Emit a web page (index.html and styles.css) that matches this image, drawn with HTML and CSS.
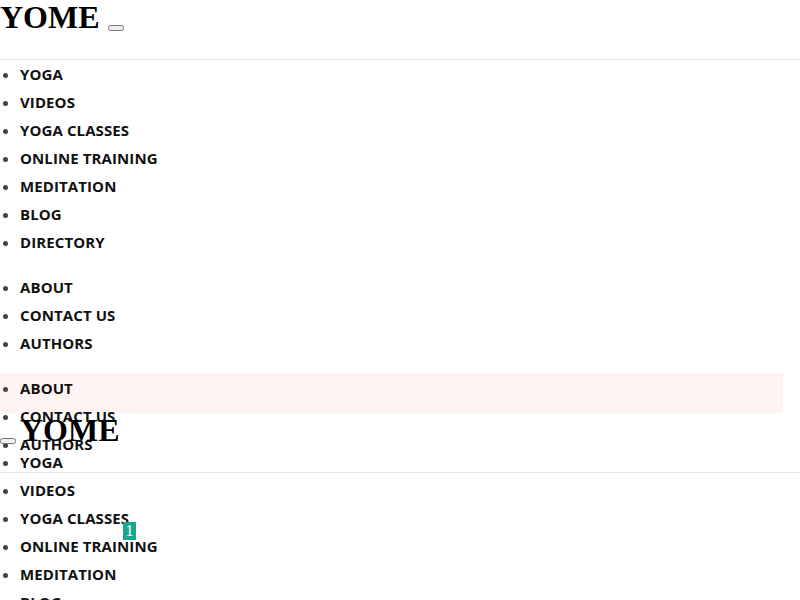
FILE: index.html
```html
<!DOCTYPE html>
<html>
  <head>
    <title>Yome</title>
    <link rel="stylesheet" href="styles.css">
  </head>
  <body>
    <div class="site-header">
      <h1 class="logo">YOME</h1>
      <button class="menu-toggle after-logo"></button>
    </div>
    <ul class="nav-list">
      <li><a href="#">YOGA</a></li>
      <li><a href="#">VIDEOS</a></li>
      <li><a href="#">YOGA CLASSES</a></li>
      <li><a href="#">ONLINE TRAINING</a></li>
      <li><a href="#">MEDITATION</a></li>
      <li><a href="#">BLOG</a></li>
      <li><a href="#">DIRECTORY</a></li>
    </ul>
    <ul class="nav-list secondary">
      <li><a href="#">ABOUT</a></li>
      <li><a href="#">CONTACT US</a></li>
      <li><a href="#">AUTHORS</a></li>
    </ul>
    <div class="top-band">
      <ul class="nav-list">
        <li><a href="#">ABOUT</a></li>
        <li><a href="#">CONTACT US</a></li>
        <li><a href="#">AUTHORS</a></li>
      </ul>
    </div>
    <div class="site-header sticky">
      <button class="menu-toggle"></button>
      <h1 class="logo">YOME</h1>
    </div>
    <ul class="nav-list overlap">
      <li><a href="#">YOGA</a></li>
      <li><a href="#">VIDEOS</a></li>
      <li><a href="#">YOGA CLASSES</a></li>
      <li><a href="#">ONLINE TRAINING</a></li>
      <li><a href="#">MEDITATION</a></li>
      <li><a href="#">BLOG</a></li>
      <li><a href="#">DIRECTORY</a></li>
    </ul>
    <div class="page-body"></div>
    <span class="badge">1</span>
  </body>
</html>
```

FILE: styles.css
```css
body {
  margin: 0;
  position: relative;
}

.site-header {
  height: 59px;
  line-height: 34px;
  border-bottom: 1px solid #e6e6e6;
}

.sticky {
  line-height: 35px;
}

.logo {
  display: inline;
  margin: 0;
  font-family: "Liberation Serif", serif;
  font-size: 32px;
  font-weight: bold;
  color: #000;
}

.menu-toggle {
  vertical-align: baseline;
}

.after-logo {
  margin-left: 4px;
}

.nav-list {
  margin: 0;
  padding-left: 20px;
  font-family: "Open Sans", sans-serif;
  font-size: 15px;
  font-weight: bold;
  letter-spacing: 0.1px;
  line-height: 28px;
  color: #444;
}

.nav-list a {
  color: #111;
  text-decoration: none;
}

.secondary {
  margin: 17px 0 16px;
}

.top-band {
  height: 40px;
  padding-top: 1px;
  box-sizing: border-box;
  background-color: #fef4f1;
  margin-right: 17px;
}

.overlap {
  margin-top: -25px;
}

.page-body {
  height: 18000px;
}

.badge {
  position: absolute;
  left: 123px;
  top: 522px;
  width: 13px;
  height: 18px;
  background-color: #1aa58c;
  color: #fff;
  font-family: "Liberation Serif", serif;
  font-size: 16px;
  line-height: 18px;
  text-align: center;
}
```
